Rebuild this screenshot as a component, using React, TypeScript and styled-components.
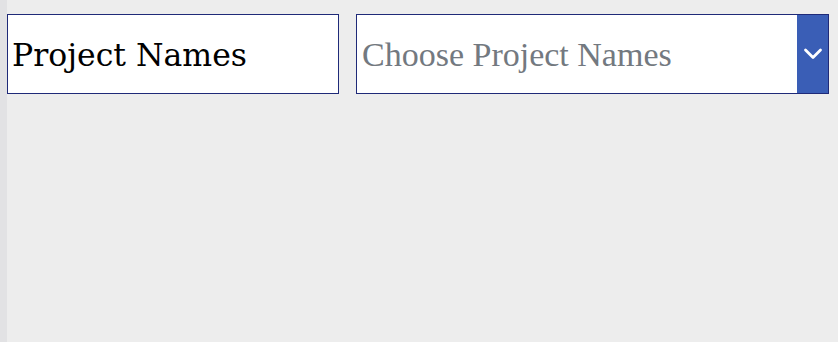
import * as React from 'react'
import styled, { createGlobalStyle } from 'styled-components'

const GlobalStyle = createGlobalStyle`
    html, body {
        margin: 0;
        padding: 0;
        background: #ededed;
    }
    #root {
        min-height: 100vh;
    }
`

const Page = styled.div`
    display: flex;
    min-height: 100vh;
`

const SideStrip = styled.div`
    width: 7px;
    flex: none;
    background: #e2e2e4;
`

const Content = styled.div`
    flex: 1;
    display: flex;
    align-items: flex-start;
    gap: 17px;
    padding: 14px 9px 0 0;
`

const LabelBox = styled.div`
    box-sizing: border-box;
    width: 332px;
    height: 80px;
    display: flex;
    align-items: center;
    padding: 1px 0 0 4px;
    background: #ffffff;
    border: 1px solid #1f2a78;
    font-family: 'DejaVu Serif', serif;
    font-size: 31.5px;
    color: #000000;
`

const SelectBox = styled.div`
    box-sizing: border-box;
    flex: 1;
    height: 80px;
    display: flex;
    align-items: stretch;
    background: #ffffff;
    border: 1px solid #1f2a78;
`

const Placeholder = styled.div`
    flex: 1;
    display: flex;
    align-items: center;
    padding: 1px 0 0 5px;
    font-family: 'Liberation Serif', serif;
    font-size: 34px;
    color: #737980;
`

const ArrowButton = styled.button`
    flex: none;
    width: 31px;
    border: none;
    padding: 0;
    margin: 0;
    background: #3a5eb6;
    display: flex;
    align-items: center;
    justify-content: center;
    cursor: pointer;

    svg {
        flex: none;
        display: block;
        width: 20px;
        height: 12px;
    }
`

const Chevron = () => (
    <svg viewBox="0 0 20 12">
        <path
            d="M2.5 2 L10 9.5 L17.5 2"
            fill="none"
            stroke="#ffffff"
            strokeWidth="2.8"
            strokeLinecap="round"
            strokeLinejoin="round"
        />
    </svg>
)

export default function App() {
    return (
        <>
            <GlobalStyle />
            <Page>
                <SideStrip />
                <Content>
                    <LabelBox>Project Names</LabelBox>
                    <SelectBox>
                        <Placeholder>Choose Project Names</Placeholder>
                        <ArrowButton title="Open">
                            <Chevron />
                        </ArrowButton>
                    </SelectBox>
                </Content>
            </Page>
        </>
    )
}
